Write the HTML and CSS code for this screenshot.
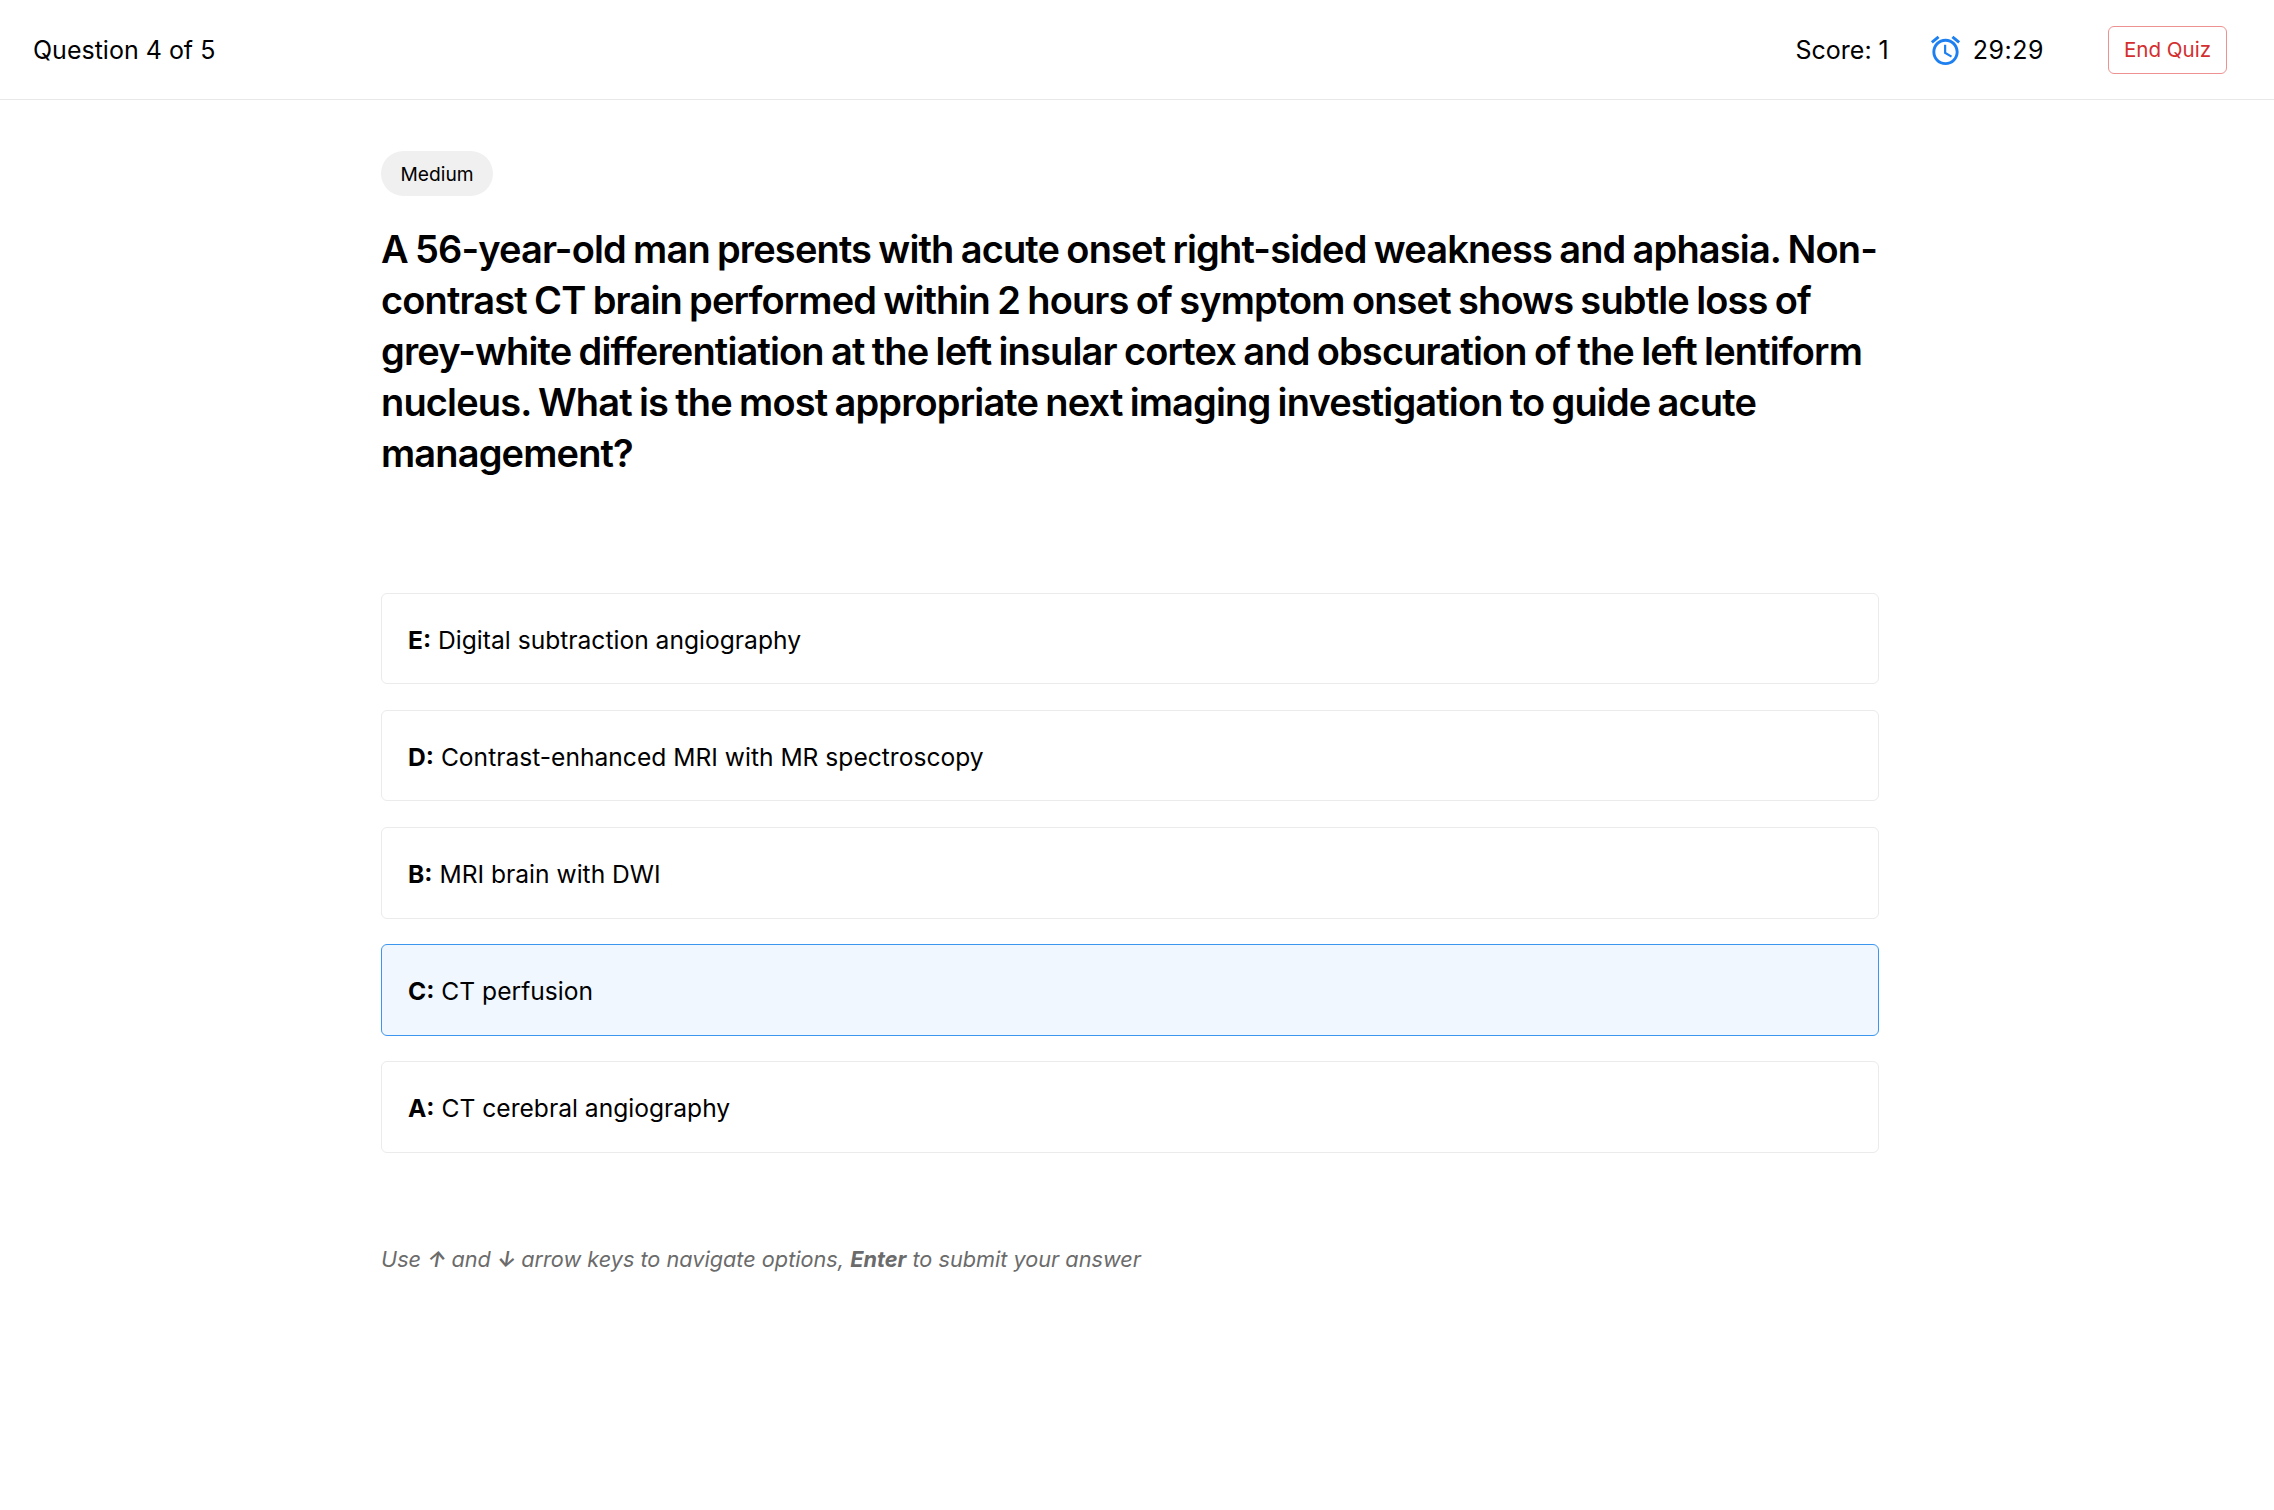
FILE: index.html
```html
<!DOCTYPE html>
<html lang="en">
  <head>
    <meta charset="UTF-8" />
    <meta name="viewport" content="width=device-width, initial-scale=1.0" />
    <title>Quiz</title>
    <link rel="stylesheet" href="styles.css">
  </head>
  <body>
    <!-- Top bar -->
    <header class="topbar">
      <div class="progress">Question 4 of 5</div>
      <div class="topbar-right">
        <div class="score">Score: 1</div>
        <div class="timer">
          <svg class="timer-icon" viewBox="0 0 24 24" fill="currentColor" aria-hidden="true">
            <path d="M22 5.72l-4.6-3.86-1.29 1.53 4.6 3.86L22 5.72zM7.88 3.39L6.6 1.86 2 5.71l1.29 1.53 4.59-3.85zM12.5 8H11v6l4.75 2.85.75-1.23-4-2.37V8zM12 4c-4.97 0-9 4.03-9 9s4.02 9 9 9c4.97 0 9-4.03 9-9s-4.03-9-9-9zm0 16c-3.87 0-7-3.13-7-7s3.13-7 7-7 7 3.13 7 7-3.13 7-7 7z"/>
          </svg>
          <span class="time">29:29</span>
        </div>
        <button class="end-button">End Quiz</button>
      </div>
    </header>

    <!-- Question -->
    <main class="quiz">
      <span class="difficulty">Medium</span>
      <h1 class="question">A 56-year-old man presents with acute onset right-sided weakness and aphasia. Non-contrast CT brain performed within 2 hours of symptom onset shows subtle loss of grey-white differentiation at the left insular cortex and obscuration of the left lentiform nucleus. What is the most appropriate next imaging investigation to guide acute management?</h1>

      <div class="options">
        <div class="option"><b>E:</b> Digital subtraction angiography</div>
        <div class="option"><b>D:</b> Contrast-enhanced MRI with MR spectroscopy</div>
        <div class="option"><b>B:</b> MRI brain with DWI</div>
        <div class="option selected"><b>C:</b> CT perfusion</div>
        <div class="option"><b>A:</b> CT cerebral angiography</div>
      </div>

      <p class="hint">Use <b class="arrow">↑</b> and <b class="arrow">↓</b> arrow keys to navigate options, <b>Enter</b> to submit your answer</p>
    </main>
  </body>
</html>
```

FILE: styles.css
```css
/* Base styles */
* {
  margin: 0;
  padding: 0;
  box-sizing: border-box;
}

html {
  background: white;
}

body {
  font-family: Inter, "Liberation Sans", sans-serif;
  color: #000;
  background: white;
  min-height: 1510px;
  padding-right: 14px;
}

/* Top bar */
.topbar {
  width: 2274px;
  height: 100px;
  padding: 1px 47px 0 33px;
  display: flex;
  align-items: center;
  justify-content: space-between;
  border-bottom: 1px solid #e8e8e8;
  font-size: 25px;
}

.topbar-right {
  display: flex;
  align-items: center;
}

.score {
  margin-right: 39px;
}

.timer {
  display: flex;
  align-items: center;
  gap: 10px;
  margin-right: 64px;
}

.timer-icon {
  width: 35px;
  height: 35px;
  color: #1e80f0;
}

.time {
  letter-spacing: 0.5px;
}

.end-button {
  width: 119px;
  height: 48px;
  padding-bottom: 1px;
  font-family: inherit;
  font-size: 20.6px;
  font-weight: 400;
  color: #d32f2f;
  background: white;
  border: 1px solid #ee9191;
  border-radius: 6px;
}

/* Question */
.quiz {
  width: 1498px;
  margin: 0 auto;
  padding-top: 51px;
}

.difficulty {
  display: inline-block;
  height: 45px;
  padding: 0 19.5px;
  line-height: 47px;
  font-size: 19.2px;
  font-weight: 400;
  background: #f0f0f0;
  border-radius: 23px;
}

.question {
  margin-top: 28px;
  font-size: 38px;
  line-height: 51px;
  letter-spacing: -0.86px;
  word-spacing: -1.5px;
  font-weight: 600;
}

/* Options */
.options {
  margin-top: 114px;
  display: flex;
  flex-direction: column;
  gap: 25.7px;
}

.option {
  height: 91.4px;
  padding: 0 26px;
  line-height: 93px;
  font-size: 24.6px;
  border: 1px solid #ebebeb;
  border-radius: 6px;
}

.option b {
  font-weight: 700;
}

.option.selected {
  background: #f0f7ff;
  border-color: #3d96ee;
}

/* Keyboard hint */
.hint {
  margin-top: 93px;
  font-size: 21.7px;
  font-style: italic;
  color: #6b6b6b;
}

.hint b {
  font-weight: 700;
}

.hint .arrow {
  font-weight: 600;
  letter-spacing: -1px;
}
```
